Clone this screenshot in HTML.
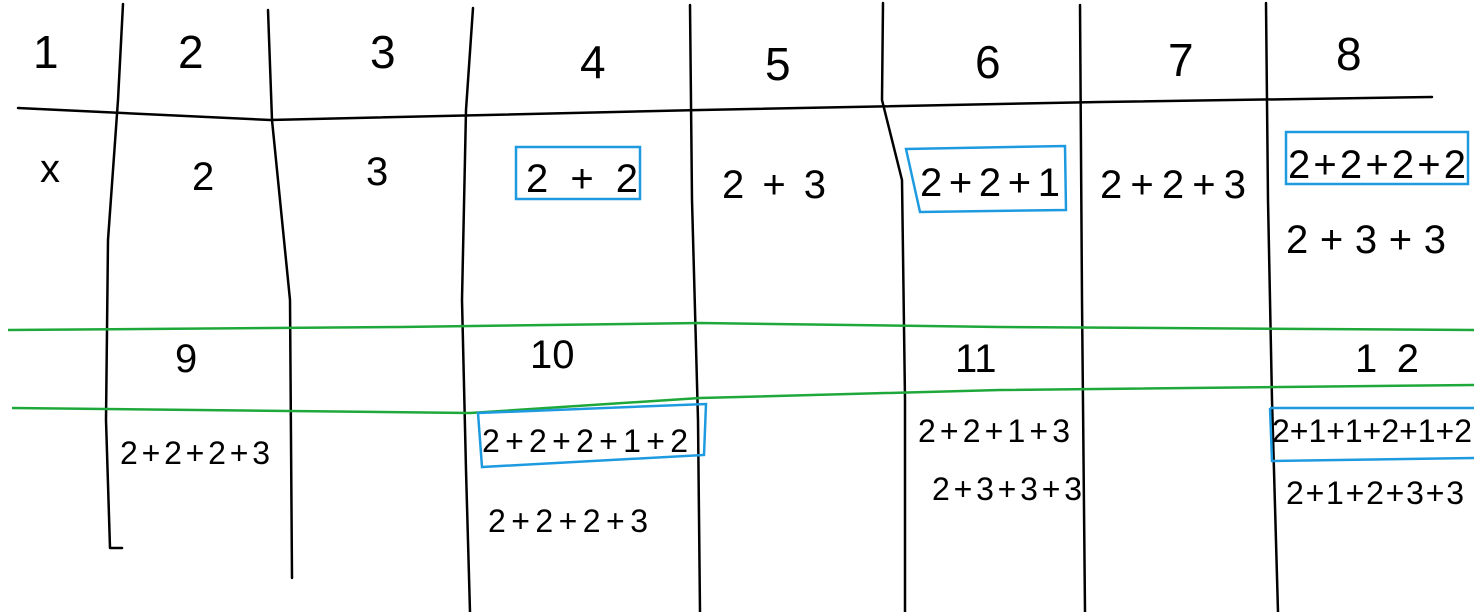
<!DOCTYPE html>
<html><head><meta charset="utf-8"><style>
html,body{margin:0;padding:0;background:#fff;width:1474px;height:612px;overflow:hidden}
svg{display:block}
text{font-family:"Liberation Sans",sans-serif;fill:#000}
</style></head><body>
<svg width="1474" height="612" viewBox="0 0 1474 612" xmlns="http://www.w3.org/2000/svg">
<g fill="none" stroke="#000" stroke-width="2.5" stroke-linecap="round" stroke-linejoin="round">
<path d="M123 4 L118 100 L108 240 L106 420 L110 548 L122 548"/>
<path d="M268 10 L272 120 L290 300 L292 578"/>
<path d="M473 8 L466 110 L462 300 L466 470 L470 612"/>
<path d="M690 5 L692 200 L698 420 L700 612"/>
<path d="M883 3 L882 100 L902 180 L905 400 L905 612"/>
<path d="M1080 5 L1082 300 L1085 612"/>
<path d="M1266 3 L1268 200 L1272 400 L1278 612"/>
<path d="M18 108 L270 120 L700 110 L1100 102 L1432 97"/>
</g>
<g fill="none" stroke="#1fa83a" stroke-width="2.5">
<path d="M8 330 L400 327 L700 323 L1000 327 L1474 330"/>
<path d="M12 408 L470 413 L700 398 L1000 390 L1474 385"/>
</g>
<g fill="none" stroke="#1e9be0" stroke-width="2.5">
<rect x="516" y="147" width="124" height="52"/>
<path d="M906 149 L1065 146 L1066 210 L920 212 Z"/>
<rect x="1286" y="132" width="182" height="52"/>
<path d="M478 413 L706 404 L704 455 L482 467 Z"/>
<path d="M1270 408 L1474 408 M1270 408 L1272 461 L1474 458"/>
</g>
<g font-size="46">
<text x="33" y="68">1</text>
<text x="178" y="68">2</text>
<text x="370" y="68">3</text>
<text x="580" y="78">4</text>
<text x="765" y="80">5</text>
<text x="975" y="78">6</text>
<text x="1168" y="76">7</text>
<text x="1336" y="70">8</text>
</g>
<g font-size="40">
<text x="40" y="182">x</text>
<text x="192" y="190">2</text>
<text x="366" y="185">3</text>
<text x="526" y="192" textLength="112">2+2</text>
<text x="722" y="198" textLength="104">2+3</text>
<text x="920" y="196" textLength="140">2+2+1</text>
<text x="1100" y="198" textLength="146">2+2+3</text>
<text x="1288" y="178" textLength="178">2+2+2+2</text>
<text x="1286" y="253" textLength="160">2+3+3</text>
<text x="175" y="372">9</text>
<text x="530" y="368">10</text>
<text x="955" y="372">11</text>
<text x="1355" y="372" textLength="64">12</text>
</g>
<g font-size="32">
<text x="120" y="464" textLength="150">2+2+2+3</text>
<text x="482" y="452" textLength="206">2+2+2+1+2</text>
<text x="488" y="532" textLength="160">2+2+2+3</text>
<text x="918" y="442" textLength="152">2+2+1+3</text>
<text x="932" y="500" textLength="150">2+3+3+3</text>
<text x="1272" y="442" textLength="200">2+1+1+2+1+2</text>
<text x="1286" y="504" textLength="178">2+1+2+3+3</text>
</g>
</svg>
</body></html>
